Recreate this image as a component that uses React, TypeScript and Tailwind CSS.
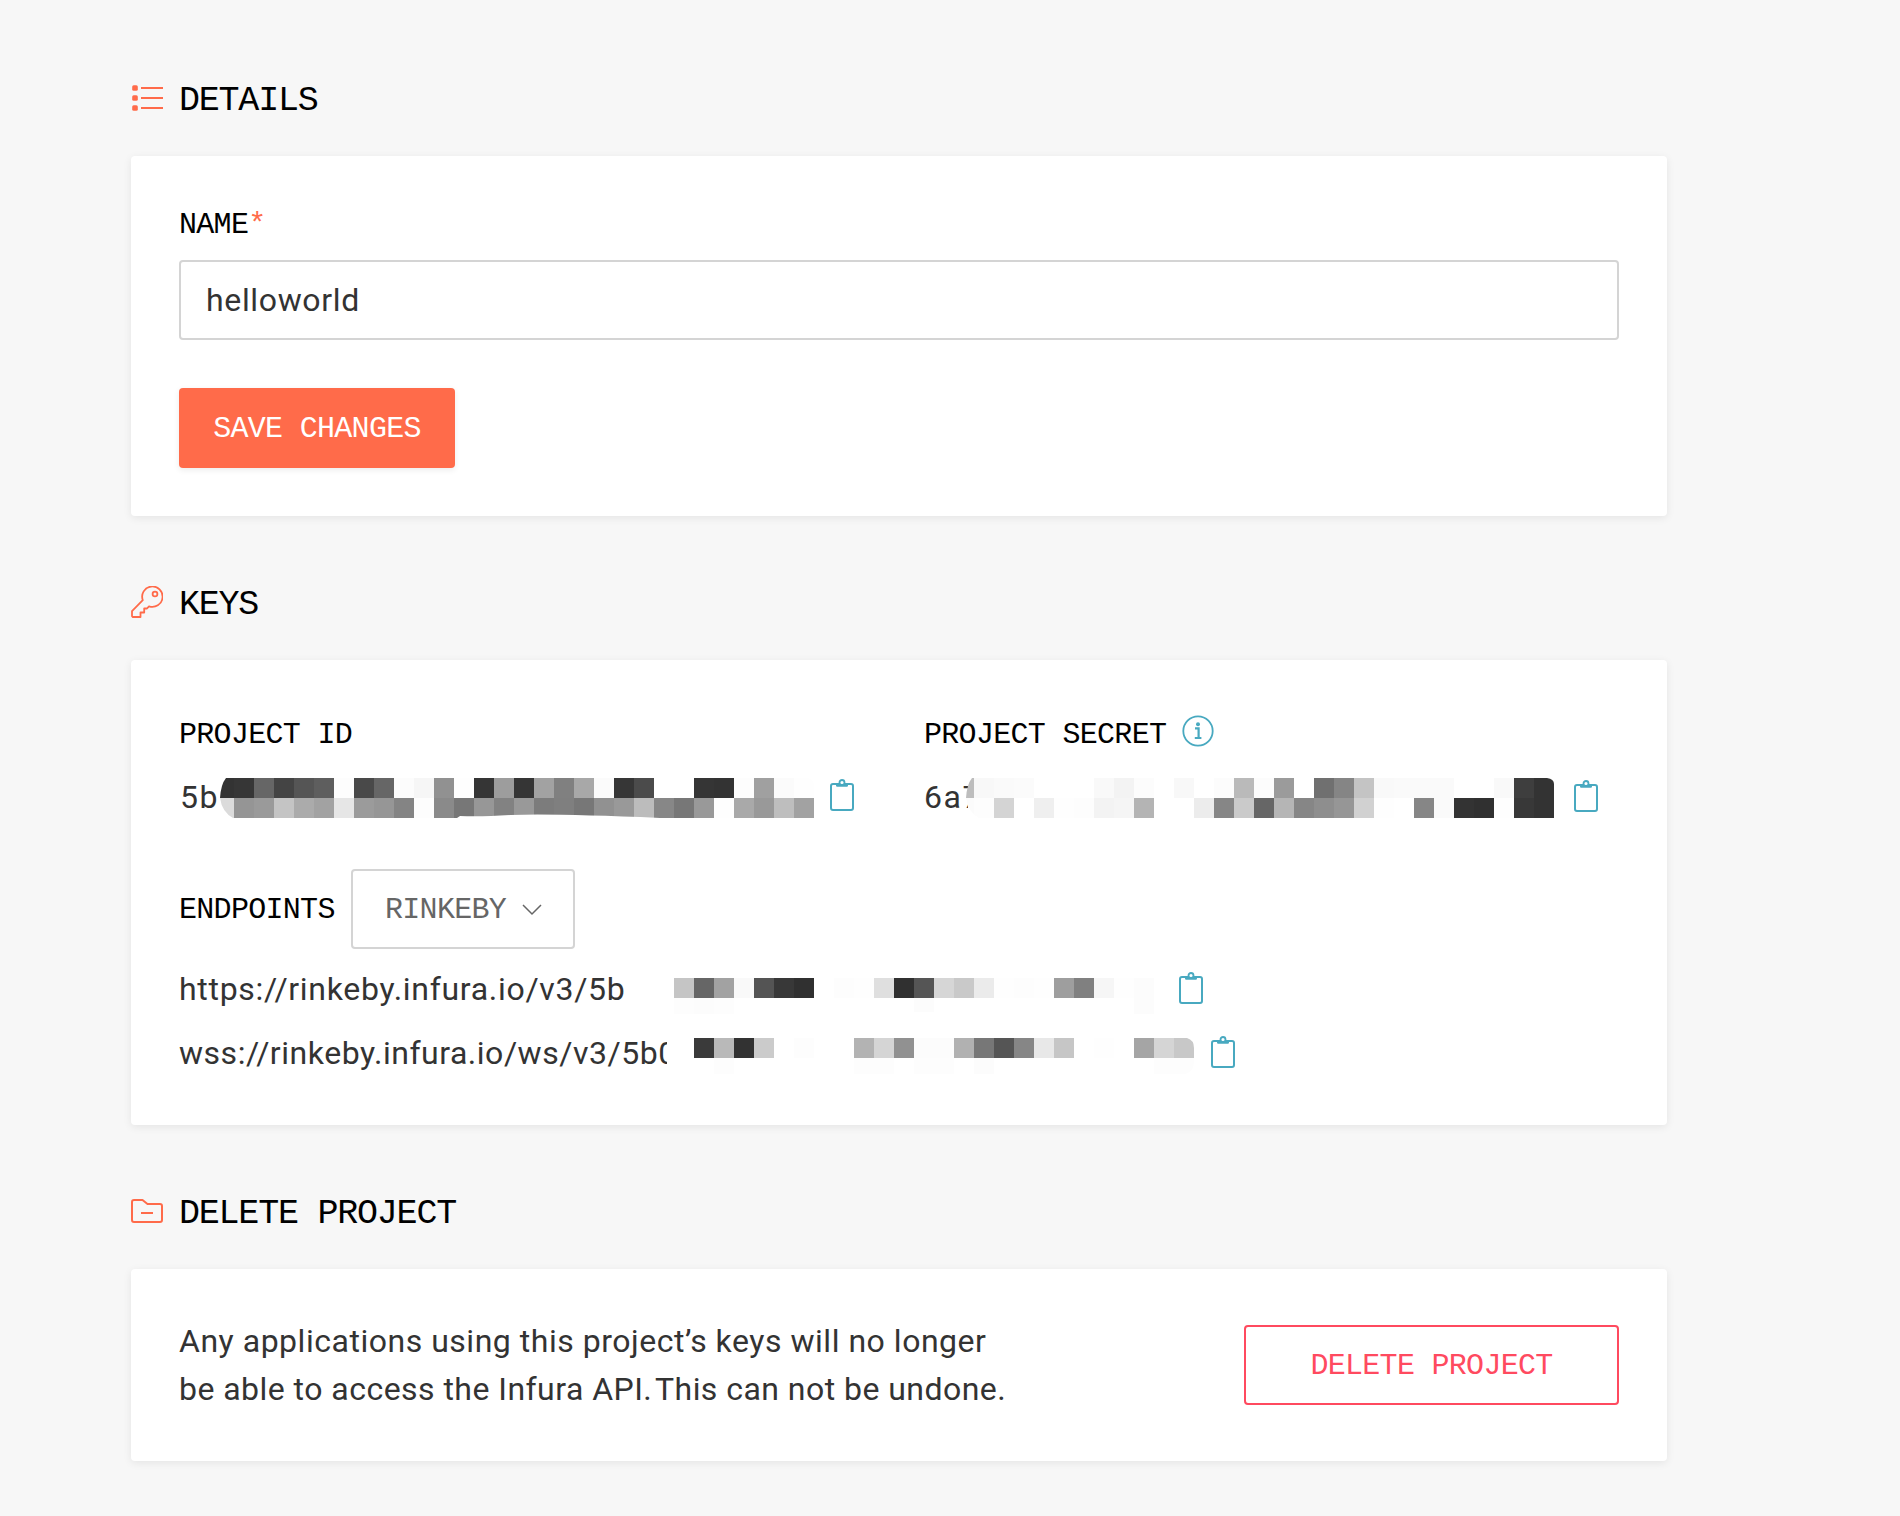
import React from "react";

const CELL = 20;

type MosaicProps = {
  id: string;
  width: number;
  height: number;
  offset: number;
  rows: string[];
  clip: string;
  className?: string;
};

// Pixelated redaction strip: each row is a space-separated list of grey levels in hex.
function Mosaic({ id, width, height, offset, rows, clip, className = "" }: MosaicProps) {
  return (
    <svg
      width={width}
      height={height}
      viewBox={`0 0 ${width} ${height}`}
      className={`shrink-0 ${className}`}
      aria-hidden="true"
    >
      <clipPath id={id}>
        <path d={clip} />
      </clipPath>
      <g clipPath={`url(#${id})`} shapeRendering="crispEdges">
        {rows.map((row, r) =>
          row
            .split(" ")
            .map((g, c) => (
              <rect
                key={`${r}-${c}`}
                x={offset + c * CELL}
                y={r * CELL}
                width={CELL}
                height={CELL}
                fill={`#${g}${g}${g}`}
              />
            ))
        )}
      </g>
    </svg>
  );
}

function ClipboardIcon({ className = "" }: { className?: string }) {
  return (
    <svg width="24" height="32" viewBox="0 0 24 32" fill="none" className={`shrink-0 text-[#48a9c0] ${className}`}>
      <rect x="1" y="5" width="22" height="26" rx="2" stroke="currentColor" strokeWidth="2" />
      <path d="M6 4.500h3.200v1h5.600v-1H18v2.100a1.200 1.200 0 0 1-1.200 1.200H7.200A1.200 1.200 0 0 1 6 6.600z" fill="currentColor" />
      <circle cx="12" cy="3.500" r="2.500" stroke="currentColor" strokeWidth="1.800" fill="#fff" />
    </svg>
  );
}

function ListIcon() {
  return (
    <svg width="32" height="32" viewBox="0 0 32 32" className="text-[#ff6b4a]">
      <g fill="currentColor">
        <rect x="1.200" y="3.200" width="5.600" height="5.600" rx="1.500" />
        <rect x="1.200" y="13.200" width="5.600" height="5.600" rx="1.500" />
        <rect x="1.200" y="23.200" width="5.600" height="5.600" rx="1.500" />
        <rect x="10" y="5" width="22" height="2" />
        <rect x="10" y="15" width="22" height="2" />
        <rect x="10" y="25" width="22" height="2" />
      </g>
    </svg>
  );
}

function KeyIcon() {
  return (
    <svg width="32" height="32" viewBox="0 0 32 32" fill="none" stroke="currentColor" strokeWidth="1.800" strokeLinejoin="round" className="text-[#ff6b4a]">
      <path d="M11.800 14.200A10.200 10.200 0 1 1 18 20.300L16 22.500H13.200V26.500H9.500V31H1.800L1 30.200V25.200Z" />
      <circle cx="24" cy="8" r="2.400" />
    </svg>
  );
}

function FolderIcon() {
  return (
    <svg width="32" height="32" viewBox="0 0 32 32" fill="none" stroke="currentColor" strokeWidth="2" strokeLinejoin="round" className="text-[#ff6b4a]">
      <path d="M3 5H11.500L16.500 9H29A2 2 0 0 1 31 11V25A2 2 0 0 1 29 27H3A2 2 0 0 1 1 25V7A2 2 0 0 1 3 5Z" />
      <path d="M10 18H22" />
    </svg>
  );
}

function InfoIcon() {
  return (
    <svg width="32" height="32" viewBox="0 0 32 32" fill="none" className="text-[#48a9c0]">
      <circle cx="16" cy="16" r="14.700" stroke="currentColor" strokeWidth="1.800" />
      <circle cx="16" cy="9.200" r="2" fill="currentColor" />
      <path d="M13 13.300h3.600v9.200M12.800 23h6.600" stroke="currentColor" strokeWidth="2.200" />
    </svg>
  );
}

function Section({ title, icon, className, children }: { title: string; icon: React.ReactNode; className: string; children: React.ReactNode }) {
  return (
    <section>
      <div className="flex h-36 items-center gap-4 pt-[29px]">
        <span className="pb-0.5">{icon}</span>
        <h2 className="pt-1 font-['Liberation_Mono',monospace] text-[35px] leading-[48px] tracking-[-1.220px] text-black">{title}</h2>
      </div>
      <div className={`rounded bg-white px-12 shadow-[0_2px_8px_rgba(0,0,0,0.08)] ${className}`}>{children}</div>
    </section>
  );
}

const label = "font-['Liberation_Mono',monospace] text-[30px] tracking-[-0.700px] whitespace-pre";

export default function App() {
  return (
    <main className="h-[1516px] w-full overflow-hidden bg-[#f7f7f7] pt-3 pl-[131px] font-['Roboto',sans-serif] text-[32px] text-[#333]">
      <div className="w-[1536px]">
        <Section title="DETAILS" icon={<ListIcon />} className="h-[360px] pt-12">
          <div className={`${label} leading-[42px] text-black`}>
            NAME<span className="text-[#ff6b4a]">*</span>
          </div>
          <div className="mt-3.5 flex h-20 items-center rounded border-2 border-[#d4d4d4] px-[25px] tracking-[0.650px]">helloworld</div>
          <button className={`${label} mt-12 flex h-20 w-[276px] items-center justify-center rounded bg-[#ff6b4a] pt-0.5 text-white shadow-[0_2px_6px_rgba(0,0,0,0.08)]`}>
            SAVE CHANGES
          </button>
        </Section>

        <Section title="KEYS" icon={<KeyIcon />} className="h-[465px] pt-[51px]">
          <div className="grid grid-cols-2 gap-12">
            <div>
              <div className={`${label} leading-[48px] text-black`}>PROJECT ID</div>
              <div className="mt-[19px] flex h-10 items-start">
                <span className="w-[41px] pl-px leading-[38px] tracking-[1.500px]">5b</span>
                <Mosaic
                  id="mosaic-id"
                  width={594}
                  height={40}
                  offset={-6}
                  clip="M6 0H588Q594 2 594 8V40H440Q400 38 370 37.500Q320 36 290 37Q260 39 240 38L237 40H13Q2 34 0 20Q1 6 6 0Z"
                  rows={[
                    "33 36 66 44 55 5e fd 49 66 fc f6 91 fe 35 9d 35 a2 80 a8 fb 36 4b ff ff 35 33 fd a0 fb fe",
                    "db 95 9a c4 ab a2 e6 9b 96 84 fd 8a 77 97 82 99 7c 7f 77 91 99 bc 87 77 99 fe a9 99 be a2",
                  ]}
                />
                <ClipboardIcon className="mt-px ml-4" />
              </div>
            </div>
            <div>
              <div className="flex h-12 items-center">
                <span className={`${label} pl-px leading-[48px] text-black`}>PROJECT SECRET</span>
                <span className="mb-2 ml-4">
                  <InfoIcon />
                </span>
              </div>
              <div className="mt-[19px] flex h-10 items-start">
                <span className="w-[45px] overflow-hidden pl-px leading-[38px] tracking-[1.500px]">6a7</span>
                <Mosaic
                  id="mosaic-secret"
                  width={588}
                  height={40}
                  offset={-12}
                  className="-ml-0.5"
                  clip="M6 0H581Q588 1 588 6V40H13Q2 34 0 20Q1 6 6 0Z"
                  rows={[
                    "bd f8 fa fb ff ff ff f9 f3 fc ff f8 ff fc ba fc 9b ff 70 85 c4 f9 fa fa fa ff ff f9 3e 33",
                    "fb fd d4 ff ef fe fd f3 f5 b4 ff ff ec 86 ca 66 b5 86 8e 96 d1 fe ff 86 fa 33 30 fe 38 33",
                  ]}
                />
                <ClipboardIcon className="mt-0.5 ml-5" />
              </div>
            </div>
          </div>

          <div className="mt-[51px] flex h-20 items-center">
            <span className={`${label} w-[172px] pt-0.5 leading-[42px] text-black`}>ENDPOINTS</span>
            <button className={`${label} flex h-20 w-56 items-center rounded border-2 border-[#d4d4d4] pt-0.5 pl-8 text-[#666]`}>
              RINKEBY
              <svg width="20" height="12" viewBox="0 0 20 12" fill="none" className="ml-4">
                <path d="M1 1L10 10L19 1" stroke="currentColor" strokeWidth="1.500" />
              </svg>
            </button>
          </div>

          <div className="mt-[23px] flex h-8 items-start">
            <span className="-mt-[3px] w-[447px] leading-10 whitespace-nowrap tracking-[0.700px]">https://rinkeby.infura.io/v3/5b</span>
            <Mosaic
              id="mosaic-https"
              width={528}
              height={36}
              offset={48}
              className="mt-1.5"
              clip="M48 0H528V36H508V20H308V34H288V20H128Q110 20 108 36H48Z"
              rows={[
                "c5 66 a2 f9 54 38 30 ff fd fe df 30 55 d6 c9 eb fe fd fe 9e 80 f6 fe fc",
                "fd fc fd ff ff ff ff ff ff ff ff ff fc ff ff ff ff ff ff ff ff ff ff fc",
              ]}
            />
            <ClipboardIcon className="ml-[25px]" />
          </div>
          <div className="mt-8 flex h-8 items-start">
            <span className="-mt-[3px] w-[488px] overflow-hidden leading-10 whitespace-nowrap tracking-[0.520px]">wss://rinkeby.infura.io/ws/v3/5b0</span>
            <Mosaic
              id="mosaic-wss"
              width={528}
              height={36}
              offset={27}
              className="mt-0.5"
              clip="M27 0H520Q527 2 527 10V20Q528 36 516 36H27Z"
              rows={[
                "3a b9 32 cb ff fd ff ff b3 d5 91 fc fc b1 77 55 86 e8 c6 ff fe ff a5 d5 c8",
                "ff fd ff ff ff ff ff ff fd fd ff fd fd ff fc ff ff ff ff ff ff ff ff fd fd",
              ]}
            />
            <ClipboardIcon className="ml-4" />
          </div>
        </Section>

        <Section title="DELETE PROJECT" icon={<FolderIcon />} className="flex h-48 items-center justify-between">
          <p className="leading-[48px] tracking-[0.520px] whitespace-nowrap">
            Any applications using this project’s keys will no longer
            <br />
            <span className="tracking-[0.460px]">be able to access the Infura API.</span>
            <span className="-ml-[5px] tracking-[0.460px]"> This can not be undone.</span>
          </p>
          <button className={`${label} flex h-20 w-[375px] items-center justify-center rounded border-2 border-[#ff4a5f] pt-0.5 text-[#ff4a5f]`}>
            DELETE PROJECT
          </button>
        </Section>
      </div>
    </main>
  );
}
